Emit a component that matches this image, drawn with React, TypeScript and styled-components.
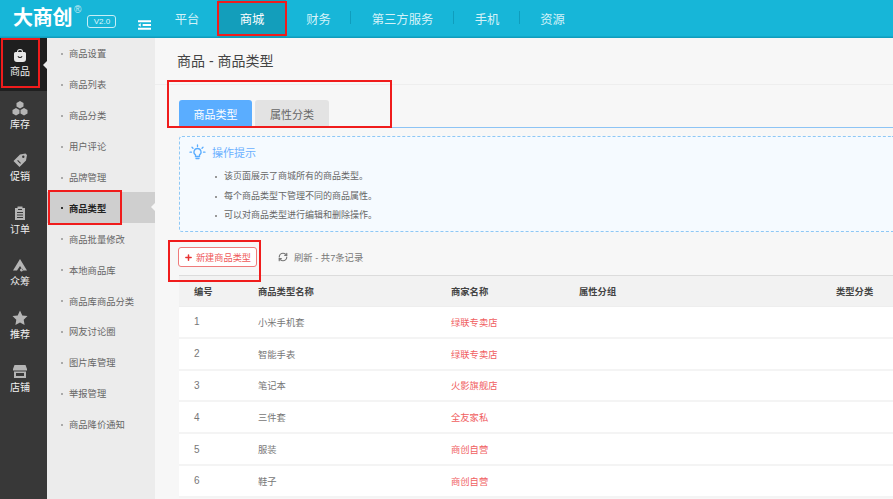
import React from "react";
import styled, { createGlobalStyle } from "styled-components";
import { RefreshCw, Plus } from "lucide-react";

const Global = createGlobalStyle`
  html, body { margin: 0; padding: 0; background: #f7f7f7; }
  body { font-family: "Liberation Sans", "Noto Sans CJK SC", sans-serif; }
  * { box-sizing: border-box; }
`;

const Page = styled.div`
  position: relative;
  width: 893px;
  height: 499px;
  overflow: hidden;
  display: flex;
  flex-direction: column;
`;

const TopBar = styled.header`
  height: 38px;
  flex: none;
  display: flex;
  align-items: stretch;
  background: #17b6d8;
  border-bottom: 1px solid #0f9dbd;
  box-shadow: inset 0 -1px 0 #13a9ca;
`;

const Logo = styled.div`
  width: 218px;
  flex: none;
  display: flex;
  align-items: flex-start;
  padding: 6px 0 0 13px;
  color: #fff;
`;

const LogoText = styled.span`
  font: 700 20px/22px "Noto Sans CJK SC", sans-serif;
  letter-spacing: -0.3px;
`;

const LogoMark = styled.span`
  font: 400 10px/10px "Liberation Sans", sans-serif;
  margin: -1px 0 0 2px;
  opacity: 0.75;
`;

const Version = styled.span`
  margin: 9px 0 0 6px;
  width: 29px;
  height: 13px;
  border: 1px solid #c7eef6;
  border-radius: 3px;
  font: 400 8px/11px "Liberation Sans", sans-serif;
  text-align: center;
  color: #dff6fb;
`;

const Toggle = styled.svg`
  width: 13px;
  height: 10px;
  margin: 14px 0 0 22px;
  flex: none;
`;

const LogoLeft = styled.div`
  display: flex;
  align-items: flex-start;
  flex: 1;
`;

const Nav = styled.nav`
  display: flex;
  align-items: stretch;
  margin-left: -62px;
`;

const NavItem = styled.a<{ $active?: boolean; $w: number; $sep?: boolean }>`
  width: ${(p) => p.$w}px;
  display: flex;
  align-items: center;
  justify-content: center;
  font-size: 12.3px;
  color: ${(p) => (p.$active ? "#fff" : "#d4f2f8")};
  background: ${(p) => (p.$active ? "#139ebb" : "transparent")};
  position: relative;
  ${(p) =>
    p.$sep
      ? `&::after { content: ""; position: absolute; right: 0; top: 11px; height: 13px; width: 1px; background: #0f9dbd; }`
      : ""}
`;

const Body = styled.div`
  flex: 1;
  display: flex;
  min-height: 0;
`;

const Rail = styled.aside`
  width: 47px;
  flex: none;
  background: #383838;
  display: flex;
  flex-direction: column;
`;

const RailItem = styled.div<{ $active?: boolean }>`
  height: 52.6px;
  position: relative;
  display: flex;
  flex-direction: column;
  align-items: center;
  padding: 9px 7px 0 0;
  gap: 2px;
  font-size: 10px;
  line-height: 13px;
  color: #f2f2f2;
  background: ${(p) => (p.$active ? "#1f1f1f" : "transparent")};
  ${(p) =>
    p.$active
      ? `&::after { content: ""; position: absolute; right: 0; top: 23px; border: 4px solid transparent; border-right-color: #ececec; }`
      : ""}
`;

const RailIcon = styled.svg`
  width: 16px;
  height: 16px;
  fill: #b5b5b5;
`;

const SubMenu = styled.aside`
  width: 108px;
  flex: none;
  background: #ececec;
`;

const SubItem = styled.div<{ $active?: boolean }>`
  height: 30.9px;
  position: relative;
  display: flex;
  align-items: center;
  padding-left: 22px;
  font-size: 9.3px;
  color: ${(p) => (p.$active ? "#222" : "#666")};
  font-weight: ${(p) => (p.$active ? 700 : 400)};
  background: ${(p) => (p.$active ? "#cfcfcf" : "transparent")};
  &::before {
    content: "";
    position: absolute;
    left: 14px;
    top: 15px;
    width: 2px;
    height: 2px;
    background: ${(p) => (p.$active ? "#333" : "#aaa")};
  }
  ${(p) =>
    p.$active
      ? `&::after { content: ""; position: absolute; right: 0; top: 11px; border: 4px solid transparent; border-right-color: #f7f7f7; }`
      : ""}
`;

const Main = styled.main`
  flex: 1;
  min-width: 0;
  background: #f7f7f7;
`;

const TitleBar = styled.div`
  height: 47px;
  padding: 0 0 2px 22px;
  display: flex;
  align-items: center;
  font-size: 14px;
  color: #444;
  border-bottom: 1px solid #eeeeee;
`;

const Section = styled.div`
  padding-left: 24px;
`;

const Tabs = styled.div`
  margin-top: 15px;
  height: 28px;
  display: flex;
  gap: 3px;
  border-bottom: 1px solid #8dc4f5;
`;

const Tab = styled.div<{ $active?: boolean }>`
  width: ${(p) => (p.$active ? 73 : 74)}px;
  height: 27px;
  border-radius: 3px 3px 0 0;
  display: flex;
  align-items: center;
  justify-content: center;
  font-size: 11px;
  color: ${(p) => (p.$active ? "#fff" : "#666")};
  background: ${(p) => (p.$active ? "#5aadff" : "#e3e3e3")};
`;

const Tip = styled.div`
  margin-top: 8px;
  height: 96px;
  border: 1px dashed #8fc8f5;
  border-right: none;
  border-radius: 3px 0 0 3px;
  background: #f5faff;
  padding: 7px 0 0 9px;
`;

const TipHead = styled.div`
  display: flex;
  align-items: center;
  gap: 6px;
  font-size: 11px;
  line-height: 16px;
  color: #6ab0ff;
  margin-bottom: 6px;
`;

const BulbIcon = styled.svg`
  width: 17px;
  height: 17px;
  flex: none;
  fill: none;
  stroke: #5aadff;
  stroke-width: 1.3;
  stroke-linecap: round;
`;

const TipList = styled.ul`
  list-style: none;
  margin: 0;
  padding: 0 0 0 35px;
`;

const TipLine = styled.li`
  position: relative;
  height: 19.5px;
  font-size: 9px;
  line-height: 19px;
  color: #666;
  &::before {
    content: "";
    position: absolute;
    left: -9px;
    top: 9px;
    width: 2px;
    height: 2px;
    background: #999;
  }
`;

const Toolbar = styled.div`
  height: 43px;
  display: flex;
  align-items: center;
  padding-top: 7px;
  margin-left: -1px;
`;

const NewButton = styled.div`
  width: 79px;
  height: 20px;
  border: 1px solid #ef7b7b;
  border-radius: 3px;
  background: #fff;
  display: flex;
  align-items: center;
  justify-content: center;
  gap: 3px;
  font-size: 9.2px;
  color: #ef5a5a;
`;

const Refresh = styled.div`
  margin-left: 21px;
  display: flex;
  align-items: center;
  gap: 6px;
  font-size: 9.3px;
  color: #777;
`;

const Table = styled.div`
  border-top: 1px solid #dcdcdc;
`;

const Columns = styled.div`
  display: grid;
  grid-template-columns: 64px 193px 128px 257px 1fr;
  align-items: center;
  font-size: 9.3px;
`;

const HeadRow = styled(Columns)`
  height: 31px;
  background: #f2f2f2;
  color: #444;
  font-weight: 700;
  padding-left: 15px;
  border-bottom: 1px solid #eeeeee;
  & > span { white-space: nowrap; }
`;

const Row = styled(Columns)`
  height: 31.8px;
  background: #fff;
  color: #777;
  padding-left: 15px;
  border-bottom: 2px solid #f4f4f4;
`;

const RowNo = styled.span`
  font-size: 10px;
`;

const Shop = styled.span`
  color: #f0605f;
`;

const Mark = styled.div<{ $x: number; $y: number; $w: number; $h: number }>`
  position: absolute;
  left: ${(p) => p.$x}px;
  top: ${(p) => p.$y}px;
  width: ${(p) => p.$w}px;
  height: ${(p) => p.$h}px;
  border: 2px solid #f01c1c;
  pointer-events: none;
`;

const rail: { label: string; icon: React.ReactNode; active?: boolean }[] = [
  {
    label: "商品",
    active: true,
    icon: (
      <path
        fill="#e8e8e8"
        d="M5 5a3 3 0 0 1 6 0h1.500a1.500 1.500 0 0 1 1.500 1.500V12a3 3 0 0 1-3 3H5a3 3 0 0 1-3-3V6.500A1.500 1.500 0 0 1 3.500 5H5Zm1 0h4a2 2 0 0 0-4 0Zm-.500 4.500a2.800 2.800 0 0 0 5 0l-.800-.400a2 2 0 0 1-3.400 0l-.800.400Z"
        fillRule="evenodd"
      />
    ),
  },
  {
    label: "库存",
    icon: (
      <path d="M8 1l3.500 2v3.500L8 8.500 4.500 6.500V3L8 1ZM4 8l3.500 2v3.500L4 15.500.500 13.500V10L4 8Zm8 0 3.500 2v3.500l-3.500 2-3.500-2V10L12 8Z" />
    ),
  },
  {
    label: "促销",
    icon: (
      <path
        fillRule="evenodd"
        d="M8 2.500 13.500 1.500 15 3l-1 5.500-6.500 6.500L1.500 9 8 2.500Zm3.300 1a1.200 1.200 0 1 0 0 2.400 1.200 1.200 0 0 0 0-2.400ZM6 8l-.800.800 3 3 .800-.800-3-3Z"
      />
    ),
  },
  {
    label: "订单",
    icon: (
      <path
        fillRule="evenodd"
        d="M3 3h2.500V1.500h5V3H13v12H3V3Zm3 1v1h4V4H6ZM5 7v1h6V7H5Zm0 2.500v1h6v-1H5ZM5 12v1h6v-1H5Z"
      />
    ),
  },
  {
    label: "众筹",
    icon: (
      <path
        fillRule="evenodd"
        d="M8 2l7 11.500h-4L8 9l-3 4.500H1L8 2Zm0 11a1.500 1.500 0 1 1 0 .1Z"
      />
    ),
  },
  {
    label: "推荐",
    icon: <path d="M8 .5l2.300 4.900 5.200.7-3.800 3.700.9 5.300L8 12.500l-4.600 2.600.9-5.300L.5 6.100l5.200-.7L8 .5Z" />,
  },
  {
    label: "店铺",
    icon: (
      <path
        fillRule="evenodd"
        d="M2.500 2h11l1.500 4v1.500H1V6l1.500-4ZM2 8.500h12V15H2V8.500ZM4 10v3h8v-3H4Z"
      />
    ),
  },
];

const sub = [
  "商品设置",
  "商品列表",
  "商品分类",
  "用户评论",
  "品牌管理",
  "商品类型",
  "商品批量修改",
  "本地商品库",
  "商品库商品分类",
  "网友讨论圈",
  "图片库管理",
  "举报管理",
  "商品降价通知",
];

const rows = [
  ["1", "小米手机套", "绿联专卖店"],
  ["2", "智能手表", "绿联专卖店"],
  ["3", "笔记本", "火影旗舰店"],
  ["4", "三件套", "全友家私"],
  ["5", "服装", "商创自营"],
  ["6", "鞋子", "商创自营"],
];

export default function App() {
  return (
    <Page>
      <Global />
      <TopBar>
        <Logo>
          <LogoLeft>
            <LogoText>大商创</LogoText>
            <LogoMark>®</LogoMark>
            <Version>V2.0</Version>
            <Toggle viewBox="0 0 14 10">
              <path
                fill="#fff"
                d="M0 0h14v2H0V0Zm5 4h9v2H5V4ZM0 8h14v2H0V8Zm0-3 3-2v4L0 5Z"
              />
            </Toggle>
          </LogoLeft>
        </Logo>
        <Nav>
          <NavItem $w={62}>平台</NavItem>
          <NavItem $w={68} $active>商城</NavItem>
          <NavItem $w={65} $sep>财务</NavItem>
          <NavItem $w={103} $sep>第三方服务</NavItem>
          <NavItem $w={66} $sep>手机</NavItem>
          <NavItem $w={65}>资源</NavItem>
        </Nav>
      </TopBar>
      <Body>
        <Rail>
          {rail.map((r) => (
            <RailItem key={r.label} $active={r.active}>
              <RailIcon viewBox="0 0 16 16">{r.icon}</RailIcon>
              {r.label}
            </RailItem>
          ))}
        </Rail>
        <SubMenu>
          {sub.map((s) => (
            <SubItem key={s} $active={s === "商品类型"}>
              {s}
            </SubItem>
          ))}
        </SubMenu>
        <Main>
          <TitleBar>商品 - 商品类型</TitleBar>
          <Section>
            <Tabs>
              <Tab $active>商品类型</Tab>
              <Tab>属性分类</Tab>
            </Tabs>
            <Tip>
              <TipHead>
                <BulbIcon viewBox="0 0 17 17">
                  <path d="M8.500 4.500a3.500 3.500 0 0 1 2 6.400V12.500h-4V10.900a3.500 3.500 0 0 1 2-6.400Z" />
                  <path d="M7 14.500h3M8.500 1v1.500M3 3.200l1 1M14 3.200l-1 1M1 8.200h1.500M14.500 8.200H16" />
                </BulbIcon>
                操作提示
              </TipHead>
              <TipList>
                <TipLine>该页面展示了商城所有的商品类型。</TipLine>
                <TipLine>每个商品类型下管理不同的商品属性。</TipLine>
                <TipLine>可以对商品类型进行编辑和删除操作。</TipLine>
              </TipList>
            </Tip>
            <Toolbar>
              <NewButton>
                <Plus size={9} strokeWidth={4} color="#e83030" />
                新建商品类型
              </NewButton>
              <Refresh>
                <RefreshCw size={10} strokeWidth={2.8} color="#777" />
                刷新 - 共7条记录
              </Refresh>
            </Toolbar>
            <Table>
              <HeadRow>
                <span>编号</span>
                <span>商品类型名称</span>
                <span>商家名称</span>
                <span>属性分组</span>
                <span>类型分类</span>
              </HeadRow>
              {rows.map((r) => (
                <Row key={r[0]}>
                  <RowNo>{r[0]}</RowNo>
                  <span>{r[1]}</span>
                  <Shop>{r[2]}</Shop>
                  <span />
                  <span />
                </Row>
              ))}
            </Table>
          </Section>
        </Main>
      </Body>
      <Mark $x={217} $y={1} $w={70} $h={35} />
      <Mark $x={1} $y={38} $w={39} $h={50} />
      <Mark $x={167} $y={80} $w={225} $h={48} />
      <Mark $x={48} $y={190} $w={74} $h={35} />
      <Mark $x={168} $y={240} $w={93} $h={42} />
    </Page>
  );
}
